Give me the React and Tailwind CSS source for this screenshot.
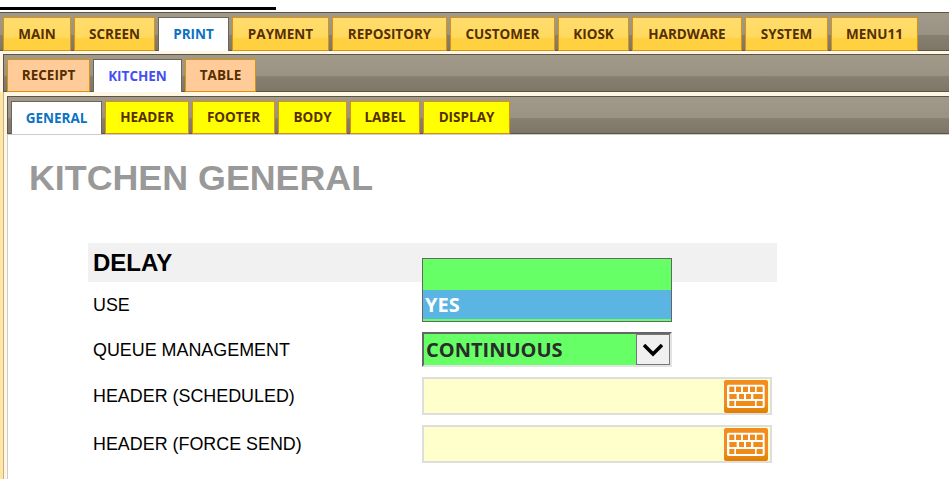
const MAIN_TABS = [
  { label: "MAIN", w: "w-[68px]" },
  { label: "SCREEN", w: "w-[81px]" },
  { label: "PRINT", w: "w-[71px]", active: true },
  { label: "PAYMENT", w: "w-[97px]" },
  { label: "REPOSITORY", w: "w-[115px]" },
  { label: "CUSTOMER", w: "w-[105px]" },
  { label: "KIOSK", w: "w-[71px]" },
  { label: "HARDWARE", w: "w-[110px]" },
  { label: "SYSTEM", w: "w-[83px]" },
  { label: "MENU11", w: "w-[87px]" },
];

const SUB_TABS = [
  { label: "RECEIPT", w: "w-[83px]" },
  { label: "KITCHEN", w: "w-[89px]", active: true },
  { label: "TABLE", w: "w-[71px]" },
];

const THIRD_TABS = [
  { label: "GENERAL", w: "w-[91px]", active: true },
  { label: "HEADER", w: "w-[84px]" },
  { label: "FOOTER", w: "w-[83px]" },
  { label: "BODY", w: "w-[69px]" },
  { label: "LABEL", w: "w-[70px]" },
  { label: "DISPLAY", w: "w-[87px]" },
];

const BAR_BG =
  "bg-[linear-gradient(180deg,#a19989_0%,#9a9282_58%,#878071_60%,#7e7768_100%)]";

const KEYS = [
  [88, 50, 15, 16],
  [108, 50, 15, 16],
  [129, 50, 15, 16],
  [150, 50, 15, 16],
  [170, 50, 18, 16],
  [88, 72, 22, 15],
  [117, 72, 15, 15],
  [138, 72, 15, 15],
  [160, 72, 28, 15],
  [88, 93, 15, 15],
  [108, 93, 57, 15],
  [170, 93, 18, 15],
];

function KeyboardIcon() {
  return (
    <div className="w-[44px] h-[33px] rounded-[2px] bg-[linear-gradient(#f28c1e,#f28c1e_70%,#df8000)]">
      <svg width="44" height="33" viewBox="72 30 132 99">
        <rect x="81" y="44" width="113" height="70" rx="5" fill="#fff" />
        {KEYS.map(([x, y, w, h]) => (
          <rect key={`${x}-${y}`} x={x} y={y} width={w} height={h} fill="#f08a18" />
        ))}
      </svg>
    </div>
  );
}

function Row({ label, className, children }) {
  return (
    <div className={`flex items-center pl-[5px] ${className}`}>
      <span className="w-[329px] pt-[1px] text-[17.9px] text-black">{label}</span>
      {children}
    </div>
  );
}

function TextWithKeyboard() {
  return (
    <div className="w-[350px] h-[38px] border-2 border-[#dedede] bg-[#ffffcc] flex items-center justify-end pr-[2px]">
      <KeyboardIcon />
    </div>
  );
}

export default function App() {
  return (
    <div className="w-[949px] h-[479px] overflow-hidden bg-white font-['Liberation_Sans',sans-serif]">
      {/* top black line */}
      <div className="h-[12px] pt-[7px] bg-white">
        <div className="w-[276px] h-[3px] bg-black" />
      </div>

      {/* MAIN TABS */}
      <div className={`h-[39px] pl-[3px] pt-[4px] flex gap-[3px] border-t border-b border-[#5c5547] ${BAR_BG}`}>
        {MAIN_TABS.map((t) => (
          <div
            key={t.label}
            className={`${t.w} h-[34px] shrink-0 flex items-center justify-center font-['Open_Sans',sans-serif] text-[13.5px] font-bold ${
              t.active
                ? "border border-[#6b6558] border-b-0 bg-white text-[#0b72c4]"
                : "border border-[#d8940f] bg-[linear-gradient(#ffdc6e,#ffd95f_60%,#ffd040_65%,#ffd040)] text-[#562f00]"
            }`}
          >
            {t.label}
          </div>
        ))}
      </div>

      <div className="h-[428px] pl-[3px] pt-[3px] bg-[#fff7e3]">
        {/* SUB TABS */}
        <div className={`h-[38px] pl-[3px] pt-[4px] flex gap-[3px] border-t border-b border-l border-[#5c5547] ${BAR_BG}`}>
          {SUB_TABS.map((t) => (
            <div
              key={t.label}
              className={`${t.w} h-[33px] shrink-0 flex items-center justify-center font-['Open_Sans',sans-serif] text-[13.5px] font-bold ${
                t.active
                  ? "border border-[#6b6558] border-b-0 bg-white text-[#4450f0]"
                  : "border border-[#d8940f] bg-[#ffcc99] text-[#562f00]"
              }`}
            >
              {t.label}
            </div>
          ))}
        </div>

        {/* gold stripe down the left edge of the lower pane */}
        <div className="h-[387px] -ml-[3px] border-l-[3px] border-l-[#ffe6a8] pl-[4px] pt-[4px] bg-[linear-gradient(90deg,#c9b27a_1px,#fff7e3_1px)]">
          {/* THIRD TABS */}
          <div className={`h-[38px] pl-[3px] pt-[4px] flex gap-[3px] border-t border-b border-l border-[#5c5547] ${BAR_BG}`}>
            {THIRD_TABS.map((t) => (
              <div
                key={t.label}
                className={`${t.w} h-[33px] shrink-0 flex items-center justify-center font-['Open_Sans',sans-serif] text-[13.5px] font-bold ${
                  t.active
                    ? "border border-[#6b6558] border-b-0 bg-white text-[#0b72c4]"
                    : "border border-[#d8940f] bg-[#ffff00] text-[#562f00]"
                }`}
              >
                {t.label}
              </div>
            ))}
          </div>

          {/* CONTENT */}
          <div className="h-[345px] bg-white border-l border-t border-[#cccccc] pl-[20px]">
            <h1 className="pt-[21px] pl-[1px] text-[35.8px] leading-[44px] font-bold text-[#999999]">KITCHEN GENERAL</h1>

            <div className="mt-[43px] ml-[60px] w-[689px] h-[39px] bg-[#f1f1f1] pl-[5px] flex items-center text-[24px] font-bold text-black">
              DELAY
            </div>

            <div className="relative">
              <div className="absolute left-[394px] -top-[24px] w-[250px] h-[64px] border border-[#666666] bg-[#66ff66] pt-[31px] font-['Open_Sans',sans-serif] text-[20px] font-bold text-white">
                <div className="h-[29px] leading-[29px] bg-[#5bb5e3] pl-[2px]">YES</div>
              </div>
            </div>

            <div className="ml-[60px]">
              <Row label="USE" className="h-[45px]" />
              <Row label="QUEUE MANAGEMENT" className="h-[45px]">
                <div className="w-[250px] h-[35px] border-2 border-t-[#666666] border-l-[#666666] border-r-[#e3e3e3] border-b-[#e3e3e3] bg-[#66ff66] flex items-center justify-between font-['Open_Sans',sans-serif] text-[20px] font-bold text-[#2b2b2b] pl-[2px]">
                  CONTINUOUS
                  <span className="w-[34px] h-[31px] border border-[#777777] bg-[#f0f0f0] flex items-center justify-center">
                    <svg width="20" height="14" viewBox="0 0 20 14">
                      <path d="M1 2 L10 11 L19 2" fill="none" stroke="#000" strokeWidth="3.5" />
                    </svg>
                  </span>
                </div>
              </Row>
              <Row label="HEADER (SCHEDULED)" className="h-[48px]">
                <TextWithKeyboard />
              </Row>
              <Row label="HEADER (FORCE SEND)" className="h-[48px]">
                <TextWithKeyboard />
              </Row>
            </div>
          </div>
        </div>
      </div>
    </div>
  );
}
